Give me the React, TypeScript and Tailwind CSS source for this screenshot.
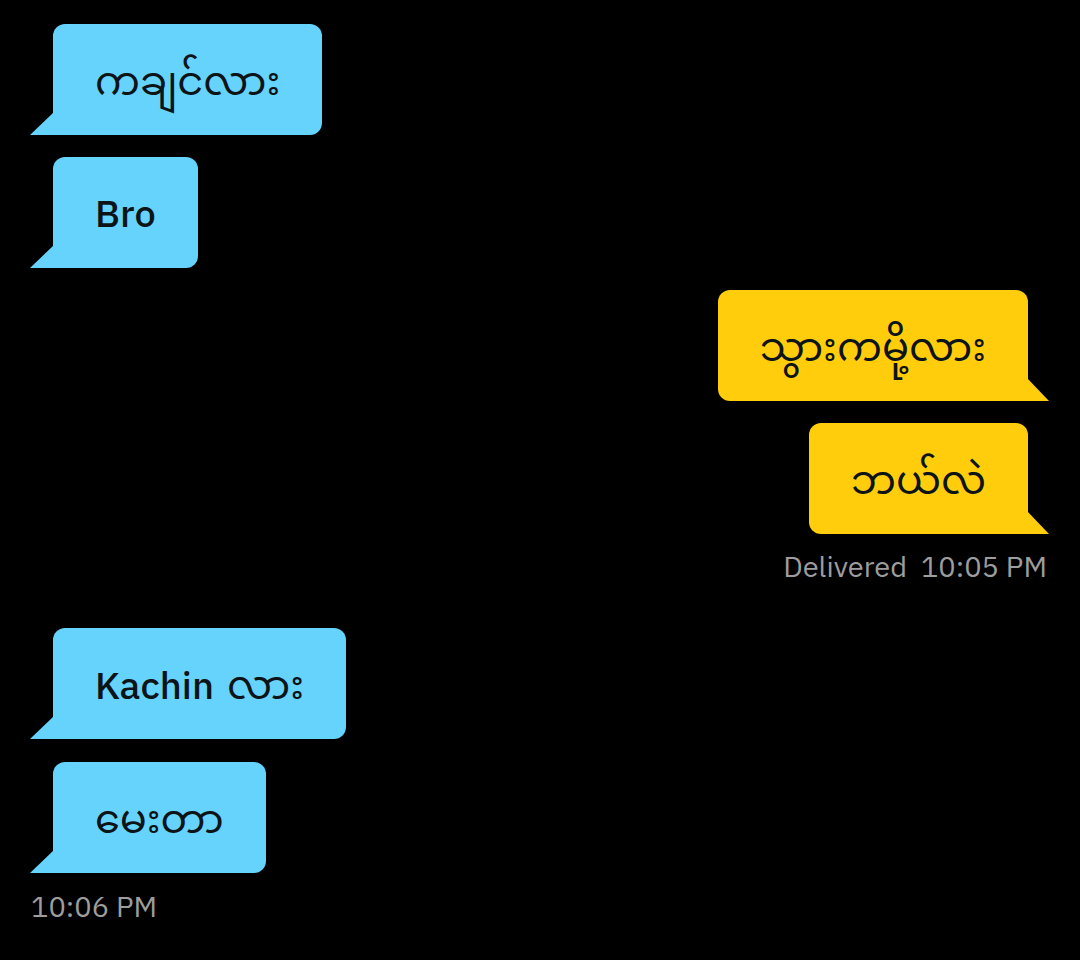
import React from 'react';

type Part = { t: string; my?: boolean; gap?: boolean };
type Msg = { parts: Part[]; side: 'in' | 'out' };

const font = { fontFamily: '"IBM Plex Sans", Inter, "Noto Sans", "Noto Sans Myanmar", Padauk, "Myanmar Text", sans-serif' };

const Tail: React.FC<{ side: 'in' | 'out'; color: string }> = ({ side, color }) =>
  side === 'in' ? (
    <svg className="absolute -left-[23px] bottom-0" width="24" height="23" viewBox="0 0 24 23">
      <path d="M24 0 L0 23 L24 23 Z" fill={color} />
    </svg>
  ) : (
    <svg className="absolute -right-[22px] bottom-0" width="23" height="23" viewBox="0 0 23 23">
      <path d="M0 0 L22 23 L0 23 Z" fill={color} />
    </svg>
  );

const Bubble: React.FC<Msg> = ({ parts, side }) => {
  const color = side === 'in' ? '#66d3fd' : '#ffcd0c';
  return (
    <div
      className={`relative h-[111px] flex items-center px-[42px] text-[38px] font-medium text-[#0d1418] ${
        side === 'in' ? 'self-start ml-[53px] bg-[#66d3fd] rounded-t-[12px] rounded-br-[12px]' : 'self-end mr-[52px] bg-[#ffcd0c] rounded-t-[12px] rounded-bl-[12px]'
      }`}
    >
      <span className="leading-none whitespace-pre">
        {parts.map((p, i) =>
          p.my ? (
            <span key={i} className={`text-[40px] font-normal ${p.gap ? 'ml-[4px]' : ''}`}>{p.t}</span>
          ) : (
            <span key={i}>{p.t}</span>
          )
        )}
      </span>
      <Tail side={side} color={color} />
    </div>
  );
};

export default function App() {
  return (
    <div className="w-[1080px] h-[960px] bg-black overflow-hidden flex flex-col pt-[24px]" style={font}>
      <div className="flex flex-col gap-[22px]">
        <Bubble side="in" parts={[{ t: 'ကချင်လား', my: true }]} />
        <Bubble side="in" parts={[{ t: 'Bro' }]} />
        <Bubble side="out" parts={[{ t: 'သွားကမို့လား', my: true }]} />
        <Bubble side="out" parts={[{ t: 'ဘယ်လဲ', my: true }]} />
      </div>
      <div className="self-end mr-[33px] mt-[18px] text-[29px] text-[#9d9d9d] leading-none flex gap-[14px]">
        <span>Delivered</span>
        <span>10:05 PM</span>
      </div>
      <div className="flex flex-col gap-[23px] mt-[47px]">
        <Bubble side="in" parts={[{ t: 'Kachin ' }, { t: 'လား', my: true, gap: true }]} />
        <Bubble side="in" parts={[{ t: 'မေးတာ', my: true }]} />
      </div>
      <div className="ml-[31px] mt-[19px] text-[29px] text-[#9d9d9d] leading-none">10:06 PM</div>
    </div>
  );
}
